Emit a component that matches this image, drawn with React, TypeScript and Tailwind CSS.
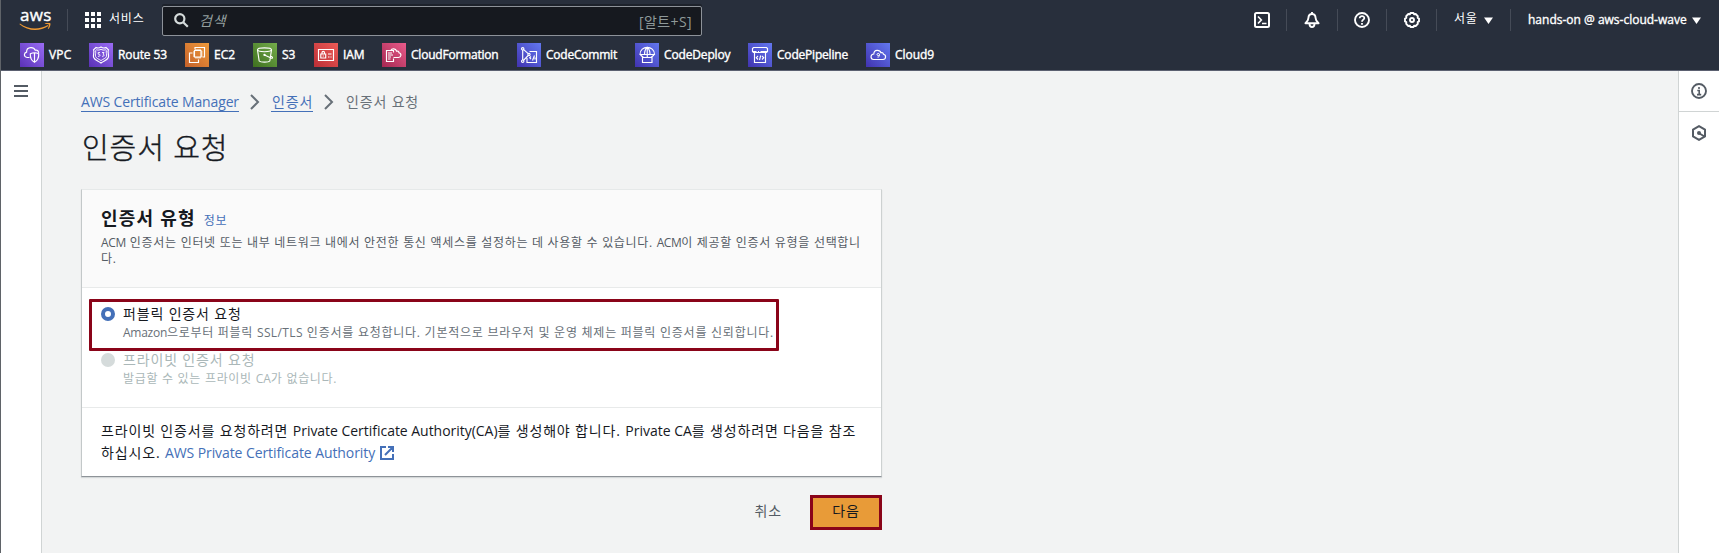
import type { ReactNode } from "react";

const favorites: { name: string; width: string; tracking: string; bg: string; icon: ReactNode }[] = [
  {
    name: "VPC", width: "w-[69px]", tracking: "tracking-[0.2px]", bg: "bg-linear-to-tr from-[#5a30b5] to-[#9a6cf5]",
    icon: (
      <>
        <path d="M9.500 14.500H7.200C5.400 14.200 4.300 13 4.400 11.600c.1-1.300 1-2.200 2.200-2.500C6.500 6.500 8.300 4.700 10.800 4.600c2.200-.1 3.700.8 4.500 2.700 1.800-.5 3 .4 3.400 2.500" />
        <path d="M14.500 9.700c1.200 0 2.800.4 4.200 1.100.2 3.700-1 6.800-4.200 8.500-3.200-1.700-4.400-4.800-4.200-8.500 1.400-.7 3-1.100 4.200-1.100zM14.500 10v9" />
      </>
    ),
  },
  {
    name: "Route 53", width: "w-[96px]", tracking: "tracking-[-0.1px]", bg: "bg-linear-to-tr from-[#5a30b5] to-[#9a6cf5]",
    icon: (
      <>
        <path d="M7 4.500c1.800.9 3.500.5 5-.5 1.500 1 3.200 1.400 5 .5l2.500 2.300c-1.400 2.400.8 4.400-.2 7.700-1 2.800-4.700 3.200-7.300 5.500-2.600-2.300-6.300-2.700-7.300-5.500-1-3.300 1.200-5.300-.2-7.700z" />
        <path d="M7.500 6.800c1.700.6 3.200.2 4.500-.5 1.300.7 2.800 1.100 4.500.5l.9.800c-.6 2.200.7 3.700 0 6-.7 1.900-3.300 2.300-5.400 4-2.100-1.700-4.700-2.100-5.400-4-.7-2.300.6-3.800 0-6z" strokeWidth="0.9" />
        <path d="M11 9.500H9.200v1.700h1c1.200.2 1 2.100-.1 2.100H8.900M13 9.500h2l-1 1.600c1.500.1 1.300 2.200-.1 2.200H13" strokeWidth="0.9" />
      </>
    ),
  },
  {
    name: "EC2", width: "w-[68px]", tracking: "tracking-[0px]", bg: "bg-linear-to-tr from-[#c5612a] to-[#ef9b3c]",
    icon: (
      <>
        <path d="M9.500 7.500h6.500v6.500H9.500zM11 7.500v-1.500M13 7.500v-1.500M15 7.500v-1.500M11 15.500v-1.500M13 15.500v-1.500M15 15.500v-1.500M8 9h1.500M8 11h1.500M8 13h1.500M16 9h1.500M16 11h1.500M16 13h1.500" />
        <path d="M10 6.500V4.500h9.500v9.500h-2M7.500 10H4.500v9.500h9v-3" />
      </>
    ),
  },
  {
    name: "S3", width: "w-[61px]", tracking: "tracking-[0px]", bg: "bg-linear-to-tr from-[#3f701f] to-[#74ad4b]",
    icon: (
      <>
        <ellipse cx="11.500" cy="6.800" rx="7" ry="1.900" />
        <path d="M4.500 7l1.700 11c1.200 1.400 9.400 1.400 10.600 0l1.700-11M11.500 12l7 3.200c1.700.3 1.200-1.400-1-2.400" />
        <circle cx="11.500" cy="11.800" r=".6" />
      </>
    ),
  },
  {
    name: "IAM", width: "w-[68px]", tracking: "tracking-[-0.1px]", bg: "bg-linear-to-tr from-[#bb2e36] to-[#ed5b57]",
    icon: (
      <>
        <path d="M4.500 6.500h15v11h-15zM6.800 11h4.900v4H6.800zM8 11V9.600c0-1.600 2.500-1.600 2.500 0V11M14 11h3.500M14 14h1.500M16.500 14h1" />
        <path d="M9.250 12.500v1" />
      </>
    ),
  },
  {
    name: "CloudFormation", width: "w-[135px]", tracking: "tracking-[-0.22px]", bg: "bg-linear-to-tr from-[#a52852] to-[#ea5b8b]",
    icon: (
      <>
        <path d="M11.500 15.500v3h-7v-11h7v2M6 10h4M6 12h5M6 14h3M6 16h2.500" />
        <path d="M11.500 14.500h5c2.600-.2 3.600-3.600.5-4.700-.2-1.500-1.200-2-2.300-1.600C13.700 5.300 10 5 8.700 7.500" />
      </>
    ),
  },
  {
    name: "CodeCommit", width: "w-[118px]", tracking: "tracking-[-0.22px]", bg: "bg-linear-to-tr from-[#4132b0] to-[#6378f0]",
    icon: (
      <>
        <circle cx="5.700" cy="5.800" r="1.200" /><circle cx="5.700" cy="18.200" r="1.200" /><circle cx="12" cy="11.500" r="1.100" />
        <path d="M5.700 7v10M6.700 6.600l4.500 4M6.700 17.200l4.500-4.700M12.500 8.500h7v11H10v-4.500M14 13.500l-1.300 1.300 1.300 1.400M17.500 12.500l-2 5M18 14.500v2" />
      </>
    ),
  },
  {
    name: "CodeDeploy", width: "w-[113px]", tracking: "tracking-[-0.15px]", bg: "bg-linear-to-tr from-[#4132b0] to-[#6378f0]",
    icon: (
      <>
        <path d="M5 11.500C5 2 19.500 2 19.500 11.500zM9.500 11.500c0-3 .9-5.700 2.800-7 1.900 1.300 2.700 4 2.700 7M12.250 4.500v10M5.500 12l3 2.500M19 12l-3 2.500M7.500 14.500h9.500v5H7.500z" />
      </>
    ),
  },
  {
    name: "CodePipeline", width: "w-[118px]", tracking: "tracking-[-0.2px]", bg: "bg-linear-to-tr from-[#4132b0] to-[#6378f0]",
    icon: (
      <>
        <path d="M5.500 4.500h13l1 1v3l-1 1h-13l-1-1v-3zM6.500 9.500v10h11v-10M4.500 8.500h4M10 8.500h1M12.500 8.500h7M10 13l-1.700 1.700 1.700 1.800M14 13l1.700 1.700L14 16.500M12.700 12.500l-1.200 4.500" />
      </>
    ),
  },
  {
    name: "Cloud9", width: "w-[80px]", tracking: "tracking-[-0.05px]", bg: "bg-linear-to-tr from-[#4132b0] to-[#6378f0]",
    icon: (
      <>
        <path d="M7.500 16.500h9.500c3.300-.3 3.400-4.700.5-5.200-.3-1.500-1.400-2-2.500-1.500C13.800 6.600 8 6.300 7.800 11c-3.700.3-3.600 5.300-.3 5.500z" />
        <path d="M13.500 11.500c0 1.400-2.500 1.400-2.500 0s2.500-1.400 2.500 0c0 1.700-.3 2.700-2 2.600" strokeWidth="1" />
      </>
    ),
  },
];

function K({ children }: { children: ReactNode }) {
  return <span className="tracking-[0.84px]">{children}</span>;
}

function KS({ children }: { children: ReactNode }) {
  return <span className="tracking-[0.7px]">{children}</span>;
}

function Divider({ className }: { className: string }) {
  return <span className={`h-[22px] w-px shrink-0 bg-[#454b57] ${className}`} />;
}

function Triangle({ className }: { className: string }) {
  return (
    <svg className={`h-[7px] w-[9px] shrink-0 ${className}`} viewBox="0 0 9 7" fill="#fff">
      <path d="M0 .5h9L4.500 7z" />
    </svg>
  );
}

function Chevron({ className }: { className: string }) {
  return (
    <svg className={`h-4 w-[10px] shrink-0 ${className}`} viewBox="0 0 10 16" fill="none" stroke="#687078" strokeWidth="2">
      <path d="M1 1l7 7-7 7" />
    </svg>
  );
}

function Logo() {
  return (
    <div className="ml-[18px] flex h-10 w-[33px] shrink-0 flex-col pt-[3px]">
      <span className="h-[20px] pl-px text-[17px] leading-[23px] tracking-[0.3px] [-webkit-text-stroke:0.4px_#fff]">aws</span>
      <svg className="h-[9px] w-[33px]" viewBox="0 13 33 9">
        <path d="M.9 13.600c8.600 6.300 19.500 6.400 28 1.500l.4 1C20.500 22 8.700 21.300.5 14.300z" fill="#f19b33" />
        <path d="M26 13.400c2-.8 4.700-.9 5.300-.1.600.9-.3 4-2 5.600-.4.300-.6 0-.4-.3.700-1.700 1.200-3.500.9-4-.4-.5-2-.5-3.600-.5-.5 0-.6-.4-.2-.7z" fill="#f19b33" />
      </svg>
    </div>
  );
}

function TopBar() {
  return (
    <div className="flex h-10 items-center text-white">
      <Logo />
      <Divider className="ml-[15px]" />
      <svg className="ml-[17px] size-4 shrink-0" viewBox="0 0 16 16" fill="#fff">
        <path d="M0 0h4v4H0zM6 0h4v4H6zM12 0h4v4h-4zM0 6h4v4H0zM6 6h4v4H6zM12 6h4v4h-4zM0 12h4v4H0zM6 12h4v4H6zM12 12h4v4h-4z" />
      </svg>
      <span className="ml-2 w-[53px] shrink-0 text-[12px] tracking-[0.8px] -mt-0.5">서비스</span>
      <div className="mt-[2px] flex h-[30px] w-[540px] shrink-0 items-center rounded-[2px] border border-[#8d9299] bg-[#16191f] pr-[9px] pl-[10px] shadow-[0_-2px_0_#1d222b]">
        <svg className="mb-0.5 ml-px size-[15px] shrink-0" viewBox="0 0 15 15" fill="none" stroke="#d5dbdb" strokeWidth="2.200">
          <circle cx="5.800" cy="5.800" r="4.600" />
          <path d="M9.200 9.200l4.600 4.600" />
        </svg>
        <span className="mb-0.5 ml-[10px] grow text-[14px] tracking-[0.88px] text-[#95a0a0] italic">검색</span>
        <span className="text-[14px] tracking-[0.4px] text-[#8f999a]">[알트+S]</span>
      </div>
      <div className="ml-auto flex items-center pr-[18px]">
        <svg className="size-4 shrink-0" viewBox="0 0 16 16" fill="none" stroke="#fff" strokeWidth="2">
          <rect x="1" y="1" width="14" height="14" rx="1.500" />
          <path d="M4 4.500L7.300 8 4 11.500M8 11.500h4.500" strokeWidth="1.700" />
        </svg>
        <Divider className="ml-4" />
        <svg className="ml-[17px] size-4 shrink-0" viewBox="0 0 16 16" fill="none" stroke="#fff" strokeWidth="1.900" strokeLinejoin="round">
          <path d="M8 0v2M8 2C5.300 2 4.500 4 4.400 6c-.1 2.500-1 3.800-3 5.300h13.200c-2-1.500-2.900-2.800-3-5.300C11.500 4 10.700 2 8 2zM5.500 12c.2 4 4.800 4 5 0" />
        </svg>
        <Divider className="ml-[17px]" />
        <svg className="ml-4 size-4 shrink-0" viewBox="0 0 16 16" fill="none" stroke="#fff" strokeWidth="1.900">
          <circle cx="8" cy="8" r="7" />
          <path d="M5.700 6.300C5.700 3.300 10.400 3.500 10.300 6.200 10.200 7.700 8 7.700 8 9.800M8 11v1.800" strokeWidth="1.800" />
        </svg>
        <Divider className="ml-4" />
        <svg className="ml-[17px] size-4 shrink-0" viewBox="0 0 16 16" fill="none" stroke="#fff" strokeWidth="1.900" strokeLinejoin="round">
          <path d="M6.500 1h3l.5 1.200 1.700-.2 2.100 2.100-.1 1.700 1.300.7v3l-1.300.7.1 1.700-2.100 2.100-1.700-.2L9.500 15h-3L6 13.800l-1.700.2-2.100-2.100.1-1.700L1 9.500v-3l1.300-.7-.1-1.700L4.300 2l1.700.2z" />
          <circle cx="8" cy="8" r="2" />
        </svg>
        <Divider className="ml-4" />
        <span className="ml-[17px] w-[24px] text-[12px] tracking-[0.7px] whitespace-nowrap -mt-0.5">서울</span>
        <Triangle className="ml-[6px]" />
        <Divider className="ml-[17px]" />
        <span className="ml-[17px] w-[160px] text-[12px] whitespace-nowrap [-webkit-text-stroke:0.35px_#fff]">hands-on @ aws-cloud-wave</span>
        <Triangle className="ml-[4px]" />
      </div>
    </div>
  );
}

function FavoritesBar() {
  return (
    <div className="flex h-[30px] items-center pl-[19px]">
      {favorites.map((f) => (
        <div key={f.name} className={`flex shrink-0 items-center ${f.width}`}>
          <span className={`block size-6 shrink-0 ${f.bg}`}>
            <svg className="size-6" viewBox="0 0 24 24" fill="none" stroke="#fff" strokeWidth="1.150">{f.icon}</svg>
          </span>
          <span className={`ml-[5px] text-[12px] whitespace-nowrap text-white [-webkit-text-stroke:0.4px_#fff] ${f.tracking}`}>{f.name}</span>
        </div>
      ))}
    </div>
  );
}

export default function App() {
  return (
    <div className="flex h-[553px] w-[1719px] flex-col overflow-hidden border-l border-[#5f6368] bg-[#f2f3f3] font-['Open_Sans','Noto_Sans_CJK_KR',sans-serif] text-[14px] text-[#16191f]">
      <header className="h-[71px] shrink-0 border-b border-[#5b6070] bg-[#282f3c]">
        <TopBar />
        <FavoritesBar />
      </header>
      <div className="flex grow">
        <nav className="w-[41px] shrink-0 border-r border-[#d0d4d4] bg-white">
          <svg className="mt-[14px] ml-[13px] h-3 w-[14px]" viewBox="0 0 14 12" fill="#545b64">
            <path d="M0 0h14v2H0zM0 5h14v2H0zM0 10h14v2H0z" />
          </svg>
        </nav>
        <main className="w-[841px] shrink-0 pl-[39px]">
          <div className="mt-[20px] flex h-[21px] items-start leading-[21px] whitespace-nowrap text-[#4470b8]">
            <span className="h-[21px] w-[158px] border-b border-[#4470b8] tracking-[-0.14px]">AWS Certificate Manager</span>
            <Chevron className="mt-[3px] ml-[11px]" />
            <span className="ml-[11px] h-[21px] w-[42px] border-b border-[#4470b8] pl-px"><K>인증서</K></span>
            <Chevron className="mt-[3px] ml-[11px]" />
            <span className="ml-[12px] text-[#687078]"><K>인증서 요청</K></span>
          </div>
          <h1 className="mt-[18px] pl-px text-[29px] leading-9 font-light tracking-[0.9px] [-webkit-text-stroke:0.4px_#16191f]">인증서 요청</h1>
          <section className="mt-[23px] h-[288px] w-[801px] border border-t-[#e6e9e9] border-r-[#cdd1d1] border-b-[#8e9398] border-l-[#c3c8c9] bg-white shadow-[0_1px_1px_rgba(0,28,36,0.12)]">
            <div className="h-[98px] border-b border-[#e8eaea] bg-[#fafafa] pt-[17px] pl-[19px]">
              <div className="flex h-[25px] items-baseline">
                <h2 className="text-[18px] leading-[22px] font-bold tracking-[1.200px]">인증서 유형</h2>
                <span className="ml-[8px] text-[12px] leading-[20px] tracking-[0.8px] text-[#4470b8]">정보</span>
              </div>
              <p className="mt-[3px] text-[12px] leading-4 whitespace-nowrap text-[#545b64]">
                <span className="tracking-[-0.3px]">ACM</span>
                <KS> 인증서는 인터넷 또는 내부 네트워크 내에서 안전한 통신 액세스를 설정하는 데 사용할 수 있습니다. </KS>
                <span className="tracking-[-0.5px]">ACM</span>
                <KS>이 제공할 인증서 유형을 선택합니<br />다.</KS>
              </p>
            </div>
            <div className="relative h-[120px] border-b border-[#e8eaea] pt-[15px] pl-[19px]">
              <div className="pointer-events-none absolute top-[11px] left-[7px] h-[52px] w-[690px] rounded-[1px] border-3 border-[#8a0419]" />
              <label className="flex">
                <span className="mt-[4px] block size-[14px] shrink-0 rounded-full border-4 border-[#4470b8] bg-white" />
                <span className="ml-[8px] block whitespace-nowrap">
                  <span className="block leading-[21px]"><K>퍼블릭 인증서 요청</K></span>
                  <span className="block text-[12px] leading-[18px] text-[#687078]">
                    <span className="tracking-[-0.25px]">Amazon</span><KS>으로부터 퍼블릭 </KS><span className="tracking-[0.4px]">SSL/TLS</span>
                    <span className="tracking-[0.75px]"> 인증서를 요청합니다. 기본적으로 브라우저 및 운영 체제는 퍼블릭 인증서를 신뢰합니다.</span>
                  </span>
                </span>
              </label>
              <label className="mt-[7px] flex text-[#aab7b8]">
                <span className="mt-[4px] block size-[14px] shrink-0 rounded-full bg-[#d5dbdb]" />
                <span className="ml-[8px] block whitespace-nowrap">
                  <span className="block leading-[21px]"><K>프라이빗 인증서 요청</K></span>
                  <span className="block text-[12px] leading-[17px]"><KS>발급할 수 있는 프라이빗 </KS>CA<KS>가 없습니다.</KS></span>
                </span>
              </label>
            </div>
            <p className="pt-[12px] pl-[19px] leading-[22px] whitespace-nowrap">
              <K>프라이빗 인증서를 요청하려면 </K><span className="tracking-[-0.03px]">Private Certificate Authority(CA)</span><K>를 생성해야 합니다. </K>Private CA<K>를 생성하려면 다음을 참조<br />하십시오. </K>
              <span className="tracking-[-0.08px] text-[#4470b8]">AWS Private Certificate Authority</span>
              <svg className="ml-[5px] inline size-[14px] align-[-2px]" viewBox="0 0 14 14" fill="none" stroke="#4470b8" strokeWidth="2">
                <path d="M6 1H1v12h12V8M8 1h5v5M13 1L5 9" />
              </svg>
            </p>
          </section>
          <div className="mt-[17px] flex h-[36px] w-[801px] items-center justify-end">
            <span className="mr-[28px] -mt-1 text-[#545b64]"><K>취소</K></span>
            <span className="flex h-[35px] w-[72px] items-center justify-center border-3 border-[#8a0419] bg-[#e89b38] pb-0.5 leading-[20px]"><K>다음</K></span>
          </div>
        </main>
        <aside className="ml-auto w-[41px] shrink-0 border-l border-[#d0d4d4] bg-white">
          <div className="flex h-[41px] justify-center border-b border-[#d0d4d4] pt-3">
            <svg className="size-4" viewBox="0 0 16 16" fill="none" stroke="#545b64" strokeWidth="1.900">
              <circle cx="8" cy="8" r="7" />
              <path d="M8 4v2M6.300 7.500H8.200v4M6 11.600h4.200" strokeWidth="1.600" />
            </svg>
          </div>
          <div className="flex justify-center pt-[13px]">
            <svg className="size-4" viewBox="0 0 16 16" fill="none" stroke="#545b64" strokeWidth="2" strokeLinejoin="round">
              <path d="M8 1.100l6 3.500v6.800l-6 3.500-6-3.500V4.600z" />
              <path d="M8.500 8.500l5 3" />
              <circle cx="8" cy="8" r="2" fill="#545b64" stroke="none" />
            </svg>
          </div>
        </aside>
      </div>
    </div>
  );
}
